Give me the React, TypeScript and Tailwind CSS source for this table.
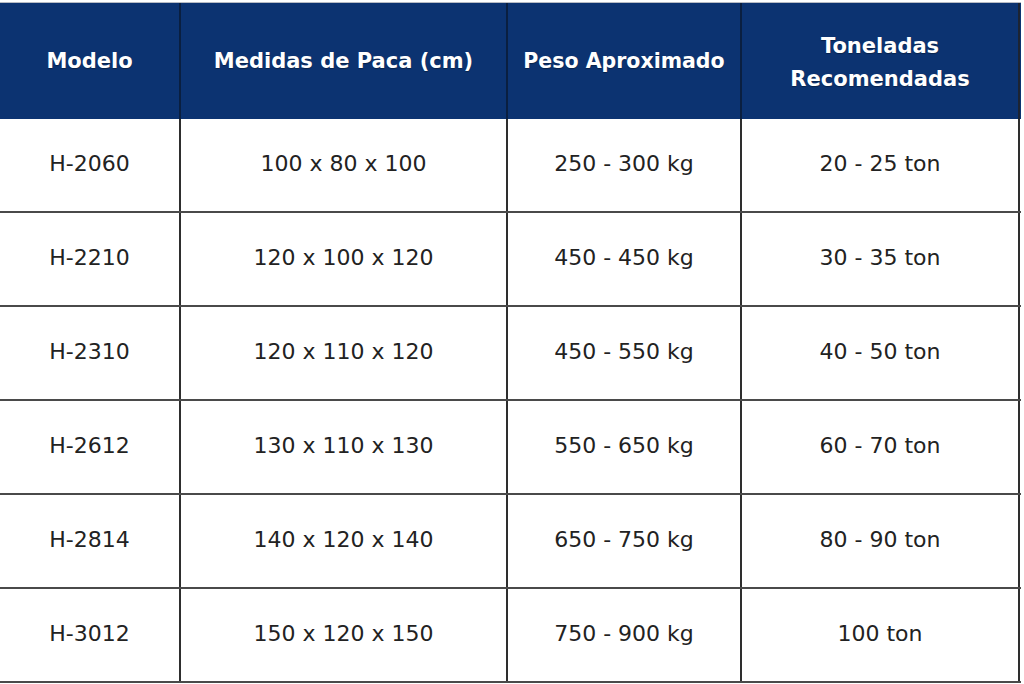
const headers = ["Modelo", "Medidas de Paca (cm)", "Peso Aproximado", "Toneladas Recomendadas"];

const rows = [
  ["H-2060", "100 x 80 x 100", "250 - 300 kg", "20 - 25 ton"],
  ["H-2210", "120 x 100 x 120", "450 - 450 kg", "30 - 35 ton"],
  ["H-2310", "120 x 110 x 120", "450 - 550 kg", "40 - 50 ton"],
  ["H-2612", "130 x 110 x 130", "550 - 650 kg", "60 - 70 ton"],
  ["H-2814", "140 x 120 x 140", "650 - 750 kg", "80 - 90 ton"],
  ["H-3012", "150 x 120 x 150", "750 - 900 kg", "100 ton"],
];

const cols = "grid grid-cols-[181px_327px_234px_278px]";

export default function App() {
  return (
    <div className="w-[1024px] h-[684px] bg-white overflow-hidden pt-[2px] font-['DejaVu_Sans',Verdana,sans-serif]">
      <div className="w-[1021px] border-t border-[#b8bcc4]">
        {/* Header */}
        <div className={`${cols} h-[116px] bg-[#0c3371] text-white`}>
          {headers.map((h, i) => (
            <div
              key={h}
              className={`flex items-center justify-center text-center font-bold leading-[33px] [text-shadow:0_1px_1px_rgba(0,0,0,0.35)] border-r-2 ${
                i < 3 ? "border-[#0a1f40] px-2" : "border-[#1c2433] px-10 pt-[4px]"
              } ${i === 2 ? "text-[20.5px]" : "text-[21px]"}`}
            >
              {h}
            </div>
          ))}
        </div>

        {/* Body */}
        {rows.map((r) => (
          <div key={r[0]} className={`${cols} h-[94px] border-b-2 border-[#4a4a4a]`}>
            {r.map((c, i) => (
              <div
                key={i}
                className="flex items-center justify-center pb-[3px] text-[22px] text-[#222] border-r-2 border-[#2e2e2e]"
              >
                {c}
              </div>
            ))}
          </div>
        ))}
      </div>
    </div>
  );
}
